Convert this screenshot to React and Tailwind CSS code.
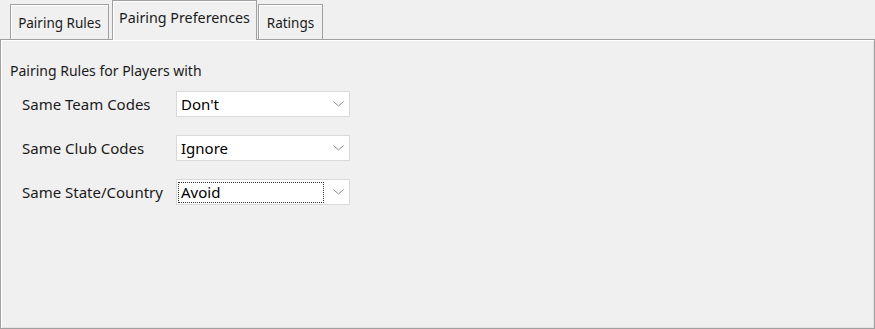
import React from "react";

function Chevron() {
  return (
    <svg width="11" height="6" viewBox="0 0 11 6" className="block">
      <path d="M0.5 0.5 L5.5 5 L10.5 0.5" fill="none" stroke="#8a8a8a" strokeWidth="1" />
    </svg>
  );
}

function Combo({ value, focused }) {
  return (
    <div className="w-[174px] h-[26px] bg-white border border-[#d9d9d9] flex items-center pl-[1px] pr-[5px]">
      <div
        className={
          "flex-1 h-[21px] flex items-center pl-[2px] text-[15px] text-black mr-[9px] " +
          (focused ? "border border-dotted border-[#333]" : "border border-transparent")
        }
      >
        {value}
      </div>
      <Chevron />
    </div>
  );
}

function Row({ label, value, focused }) {
  return (
    <div className="flex items-center h-[26px]">
      <div className="w-[175px] pl-[21px] text-[15px] text-[#1a1a1a]">{label}</div>
      <Combo value={value} focused={focused} />
    </div>
  );
}

export default function App() {
  return (
    <div
      className="w-[875px] h-[329px] bg-[#f0f0f0] overflow-hidden"
      style={{ fontFamily: '"Noto Sans", "Open Sans", sans-serif' }}
    >
      <div className="flex items-end h-[39px] pl-[10px]">
        <div className="w-[99px] h-[35px] border border-b-0 border-[#a0a0a0] shadow-[inset_1px_1px_0_#ffffff] bg-[#f0f0f0] flex items-center justify-center text-[13.5px] text-[#1a1a1a] pt-[2px]">
          Pairing Rules
        </div>
        <div className="relative z-10 ml-[3px] w-[145px] h-[40px] -mb-px border border-b-0 border-[#a0a0a0] shadow-[inset_1px_1px_0_#ffffff] bg-[#f0f0f0] flex items-start justify-center pt-[6px] text-[14.3px] text-[#1a1a1a]">
          Pairing Preferences
        </div>
        <div className="ml-[1px] w-[65px] h-[35px] border border-b-0 border-[#a0a0a0] shadow-[inset_1px_1px_0_#ffffff] bg-[#f0f0f0] flex items-center justify-center text-[13.5px] text-[#1a1a1a] pt-[2px]">
          Ratings
        </div>
      </div>
      <div className="h-[290px] border border-[#a0a0a0] shadow-[inset_1px_1px_0_#ffffff,inset_-1px_-1px_0_#e3e3e3] bg-[#f0f0f0] pt-[21px]">
        <div className="pl-[9px] text-[14px] text-[#1a1a1a] leading-[19px]">Pairing Rules for Players with</div>
        <div className="mt-[11px] flex flex-col gap-[18px]">
          <Row label="Same Team Codes" value="Don't" />
          <Row label="Same Club Codes" value="Ignore" />
          <Row label="Same State/Country" value="Avoid" focused />
        </div>
      </div>
    </div>
  );
}
